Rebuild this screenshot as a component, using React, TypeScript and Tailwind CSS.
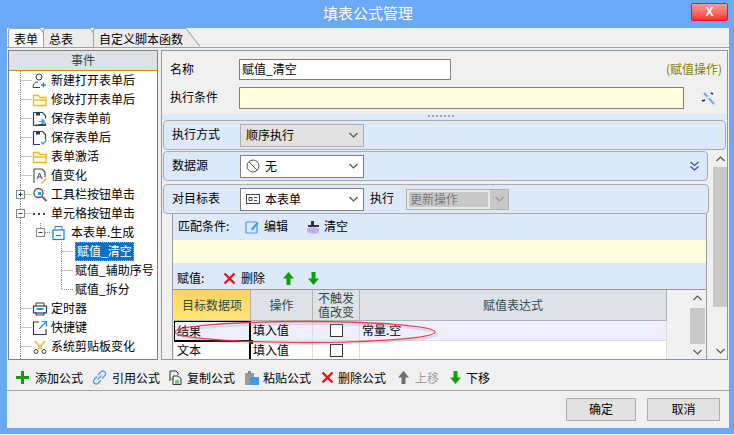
import type { ReactNode } from 'react'

const FONT = 'font-["Noto_Sans_CJK_SC",sans-serif]'

function Svg({ w = 16, h = 16, children }: { w?: number; h?: number; children: ReactNode }) {
  return (
    <svg width={w} height={h} viewBox={`0 0 ${w} ${h}`} fill="none" className="shrink-0 block">
      {children}
    </svg>
  )
}

function Chevron({ color = '#555' }: { color?: string }) {
  return (
    <svg width="9" height="6" viewBox="0 0 9 6" fill="none" className="shrink-0 block">
      <path d="M0.5 1l4 4 4-4" stroke={color} strokeWidth="1.2" />
    </svg>
  )
}

const icons: Record<string, ReactNode> = {
  user: (
    <Svg>
      <circle cx="7" cy="4" r="3" stroke="#444" />
      <path d="M1 14.5c0-4 2.5-5.500 5-5.500M1 14.500h7" stroke="#444" />
      <path d="M11.500 9.500v5M9 12h5" stroke="#10b060" strokeWidth="1.400" />
    </Svg>
  ),
  folder: (
    <Svg>
      <path d="M1.500 13.500v-10h5l1.500 2h6v8z" stroke="#ffb400" strokeWidth="1.300" />
      <path d="M1.500 8h13" stroke="#ffb400" strokeWidth="1.300" />
    </Svg>
  ),
  saveIn: (
    <Svg>
      <path d="M1.500 1.500h9l3 3v3M13.500 13v1.500h-12z M1.500 1.500v13" stroke="#2a3f55" strokeWidth="1.200" />
      <path d="M4 1.500h4v3h-4z" fill="#2a3f55" />
      <path d="M7 10.500h5M10 8l3 2.500-3 2.500z" stroke="#3a9be8" fill="#3a9be8" />
    </Svg>
  ),
  saveOk: (
    <Svg>
      <path d="M1.500 1.500h9l3 3v5M8 14.500h-6.500v-13" stroke="#2a3f55" strokeWidth="1.200" />
      <path d="M4 1.500h4v3h-4z" fill="#2a3f55" />
      <path d="M9 12l2 2 3.500-4" stroke="#3a9be8" strokeWidth="1.300" />
    </Svg>
  ),
  value: (
    <Svg>
      <path d="M2 15v-14h8l3 3v5" stroke="#445" strokeWidth="1.100" />
      <path d="M5 11l2.500-6 2.500 6M6 9h3" stroke="#445" />
      <path d="M9 15l5-5 1 1-5 5z" fill="#f0b030" />
    </Svg>
  ),
  tool: (
    <Svg>
      <circle cx="6.500" cy="6" r="4.500" stroke="#555" strokeWidth="1.300" />
      <path d="M10 9.500l4.500 4.500" stroke="#666" strokeWidth="2" />
      <rect x="6" y="5" width="3" height="3" fill="#2a9be8" />
      <path d="M13 3l-1 1" stroke="#bbb" />
    </Svg>
  ),
  dots: (
    <Svg w={14}>
      <rect x="1" y="7" width="2" height="2" fill="#444" />
      <rect x="6" y="7" width="2" height="2" fill="#444" />
      <rect x="11" y="7" width="2" height="2" fill="#444" />
    </Svg>
  ),
  form: (
    <Svg w={13}>
      <path d="M3 4.500v-3h7v3" stroke="#1380d8" />
      <rect x="1" y="5" width="11" height="9.500" stroke="#1380d8" strokeWidth="1.200" />
      <path d="M4 10.500h5" stroke="#1380d8" strokeWidth="1.200" />
    </Svg>
  ),
  timer: (
    <Svg>
      <path d="M4 5v-3h8v3" stroke="#2a3f55" />
      <rect x="1.500" y="5" width="13" height="7" stroke="#2a3f55" strokeWidth="1.200" />
      <rect x="4.500" y="7" width="7" height="2" fill="#1f8ee0" />
      <path d="M4 11v3h8v-3" stroke="#2a3f55" />
    </Svg>
  ),
  shortcut: (
    <Svg>
      <path d="M7 2h-5.500v12.500h12.500v-5.500" stroke="#2a3f55" strokeWidth="1.200" />
      <path d="M7 9l7-7M9.500 1.500h5v5" stroke="#1f8ee0" strokeWidth="1.200" />
    </Svg>
  ),
  scissors: (
    <Svg>
      <circle cx="4" cy="12.500" r="2" stroke="#444" />
      <circle cx="12" cy="12.500" r="2" stroke="#444" />
      <path d="M3 2l7 8.500M13 2l-7 8.500" stroke="#f0b020" strokeWidth="1.200" />
    </Svg>
  ),
}

type RowProps = {
  level: 1 | 2 | 3
  icon?: string
  text?: string
  exp?: '+' | '-'
  last?: boolean
  selected?: boolean
}

function Connector({ level, exp, last }: RowProps) {
  const w = level === 1 ? 23 : level === 2 ? 43 : 66
  return (
    <svg width={w} height="19" viewBox={`0 0 ${w} 19`} fill="none" className="shrink-0 block">
      <path d="M11.500 0v19" stroke="#888" strokeDasharray="1 1" />
      {level === 1 && <path d="M11.500 9.500h11" stroke="#888" strokeDasharray="1 1" />}
      {level === 2 && <path d="M31.500 0v9.500h11" stroke="#888" strokeDasharray="1 1" />}
      {level === 3 && <path d={last ? 'M52.500 0v9.500h12' : 'M52.500 0v19M52.500 9.500h12'} stroke="#888" strokeDasharray="1 1" />}
      {exp && (
        <>
          <rect
            x={level === 1 ? 7.500 : 27.500}
            y="5.500"
            width="8"
            height="8"
            fill="#fff"
            stroke="#888"
          />
          <path
            d={level === 1 ? 'M9.500 9.500h4' : 'M29.500 9.500h4'}
            stroke="#1f3f6f"
          />
          {exp === '+' && <path d="M11.500 7.500v4" stroke="#1f3f6f" />}
        </>
      )}
    </svg>
  )
}

function TreeRow(props: RowProps) {
  const { icon, text, selected } = props
  return (
    <div className="flex items-center h-[19px] shrink-0 whitespace-nowrap">
      <Connector {...props} />
      {icon && <span className="w-[19px]">{icons[icon]}</span>}
      {text && (
        <span
          className={
            selected
              ? 'bg-[#0670c8] text-white border border-dotted border-[#ff9020] h-[19px] px-[1px] leading-[16px]'
              : 'text-black leading-[17px] pb-[2px]'
          }
        >
          {text}
        </span>
      )}
    </div>
  )
}

function Tab({ text, active, w }: { text: string; active?: boolean; w: number }) {
  const fill = active ? '#fbfbfb' : '#ececec'
  return (
    <div className="flex h-[19px] mr-[-12px] first:ml-[1px]">
      <div
        className={
          'flex items-center pl-[5px] pt-[1px] border-l border-t border-[#a0a0a0] rounded-tl-[3px] ' +
          (active ? 'bg-[#fbfbfb]' : 'bg-[#ececec]')
        }
        style={{ width: w }}
      >
        {text}
      </div>
      <svg width="16" height="19" viewBox="0 0 16 19" fill="none" className="block shrink-0">
        <path d="M0 0.500h1l14 18.500h-15z" fill={fill} />
        <path d="M0 0.500h1l14 18" stroke="#909090" />
      </svg>
    </div>
  )
}

function Card({ label, children, className }: { label: string; children?: ReactNode; className: string }) {
  return (
    <div
      className={
        'flex items-center h-[30px] shrink-0 bg-[#dde9f8] border border-[#ababab] rounded-[4px] ' + className
      }
    >
      <span className="ml-[8px] w-[68px] pb-[2px]">{label}</span>
      {children}
    </div>
  )
}

function Select({ children, gray, w = 124 }: { children: ReactNode; gray?: boolean; w?: number }) {
  return (
    <div
      className={
        'flex items-center h-[23px] pl-[5px] pr-[5px] gap-[3px] ' +
        (gray ? 'bg-[#e1e1e1] border border-[#adadad]' : 'bg-white border border-[#7f7f7f]')
      }
      style={{ width: w }}
    >
      <span className="flex-1 flex items-center gap-[5px]">{children}</span>
      <Chevron />
    </div>
  )
}

function ToolItem({ icon, text, gray, className }: { icon: ReactNode; text: string; gray?: boolean; className: string }) {
  return (
    <div className={'flex items-center whitespace-nowrap ' + className}>
      {icon}
      <span className={gray ? 'text-[#a0a0a0]' : 'text-black'}>{text}</span>
    </div>
  )
}

const RedX = ({ s = 13 }: { s?: number }) => (
  <svg width={s} height={s} viewBox="0 0 13 13" fill="none" className="block shrink-0">
    <path d="M1.500 1.500l10 10M11.500 1.500l-10 10" stroke="#e8101c" strokeWidth="2.300" />
  </svg>
)

const Arrow = ({ up, color = '#0ca00f' }: { up?: boolean; color?: string }) => (
  <svg width="11" height="13" viewBox="0 0 11 13" fill="none" className="block shrink-0">
    <path d={up ? 'M5.500 0l5.500 6.500h-3.500v6.500h-4v-6.500h-3.500z' : 'M5.500 13l5.500-6.500h-3.500v-6.500h-4v6.500h-3.500z'} fill={color} />
  </svg>
)

function ScrollBar({ thumbTop, thumbH, w = 15 }: { thumbTop: number; thumbH: number; w?: number }) {
  return (
    <div className="flex flex-col items-center bg-[#f0f0f0] h-full shrink-0 overflow-hidden" style={{ width: w }}>
      <div className="h-[16px] shrink-0 flex items-center justify-center rotate-180">
        <Chevron color="#555" />
      </div>
      <div className="flex-1 w-full" style={{ paddingTop: thumbTop }}>
        <div className="bg-[#c9c9c9] w-full" style={{ height: thumbH }} />
      </div>
      <div className="h-[16px] shrink-0 flex items-center justify-center">
        <Chevron color="#555" />
      </div>
    </div>
  )
}

function Check() {
  return <div className="w-[13px] h-[13px] border border-[#333] bg-white" />
}

function HeadCell({ className, children }: { className: string; children: ReactNode }) {
  return (
    <div className={'flex items-center justify-center text-center shrink-0 text-[#2d4a4a] border-r border-[#aeb2b6] leading-[14px] ' + className}>
      {children}
    </div>
  )
}

export default function App() {
  return (
    <div className={'w-[734px] h-[434px] bg-[#6aa9f6] flex flex-col overflow-hidden text-[12px] text-black ' + FONT}>
      <div className="h-[28px] shrink-0 flex items-center relative">
        <div className="w-full text-center text-white text-[15px] pl-[2px] pb-[2px]">填表公式管理</div>
        <div className="absolute right-[6px] top-[3px] w-[37px] h-[18px] rounded-[2px] border border-[#f01020] bg-gradient-to-b from-[#ff9a9c] to-[#f52c30] flex items-center justify-center text-white font-bold text-[12px] font-['Liberation_Sans',sans-serif]">
          X
        </div>
      </div>

      <div className="ml-[7px] mr-[5px] h-[400px] bg-[#f0f0f0] flex flex-col">
        <div className="h-[20px] shrink-0 flex border-b border-[#a0a0a0]">
          <Tab text="表单" active w={31} />
          <Tab text="总表" w={46} />
          <Tab text="自定义脚本函数" w={92} />
        </div>

        <div className="flex h-[310px] mt-[2px] shrink-0">
          <div className="ml-[1px] w-[150px] shrink-0 border border-[#808080] bg-white flex flex-col overflow-hidden">
            <div className="h-[19px] shrink-0 bg-[#dee2e7] text-[#2d4a4a] text-center leading-[18px] border-b border-[#cc8a1e] box-content">
              事件
            </div>
            <TreeRow level={1} icon="user" text="新建打开表单后" />
            <TreeRow level={1} icon="folder" text="修改打开表单后" />
            <TreeRow level={1} icon="saveIn" text="保存表单前" />
            <TreeRow level={1} icon="saveOk" text="保存表单后" />
            <TreeRow level={1} icon="folder" text="表单激活" />
            <TreeRow level={1} icon="value" text="值变化" />
            <TreeRow level={1} icon="tool" text="工具栏按钮单击" exp="+" />
            <TreeRow level={1} icon="dots" text="单元格按钮单击" exp="-" />
            <TreeRow level={2} icon="form" text="本表单.生成" exp="-" />
            <TreeRow level={3} text="赋值_清空" selected />
            <TreeRow level={3} text="赋值_辅助序号" />
            <TreeRow level={3} text="赋值_拆分" last />
            <TreeRow level={1} icon="timer" text="定时器" />
            <TreeRow level={1} icon="shortcut" text="快捷键" />
            <TreeRow level={1} icon="scissors" text="系统剪贴板变化" />
            <TreeRow level={1} />
          </div>

          <div className="ml-[3px] w-[567px] shrink-0 border border-[#7a9ab5] flex flex-col overflow-hidden">
            <div className="flex items-center h-[21px] mt-[8px] shrink-0">
              <span className="ml-[8px] w-[69px] pb-[2px]">名称</span>
              <div className="w-[212px] h-[21px] border border-[#7f7f7f] bg-white pl-[2px] leading-[18px]">赋值_清空</div>
              <span className="ml-auto mr-[5px] text-[#808000] pb-[2px]">(赋值操作)</span>
            </div>
            <div className="flex items-center h-[22px] mt-[7px] shrink-0">
              <span className="ml-[8px] w-[69px] pb-[2px]">执行条件</span>
              <div className="w-[445px] h-[22px] border border-[#7f7f7f] bg-[#ffffe0]" />
              <div className="ml-[17px]">
                <Svg w={15} h={15}>
                  <path d="M3 2l10 11" stroke="#6fa8f0" strokeWidth="2" />
                  <path d="M2 11l9-8" stroke="#e8eef8" strokeWidth="2" />
                  <path d="M1 10l3-1M10 2l2 1" stroke="#222" strokeWidth="1.500" />
                </Svg>
              </div>
            </div>
            <div className="h-[6px] mt-[5px] bg-[#dde9f8] shrink-0 flex justify-center">
              <div className="ml-[-8px] mt-[1px] w-[26px] h-[2px] border-t-2 border-dotted border-[#a8a8a8]" />
            </div>

            <Card label="执行方式" className="ml-[1px] mr-[1px]">
              <Select gray>顺序执行</Select>
            </Card>

            <div className="flex flex-1 min-h-0 mt-[1px]">
              <div className="w-[547px] shrink-0 flex flex-col min-h-0">
                <Card label="数据源" className="ml-[1px] mr-[1px]">
                  <Select>
                    <Svg w={14} h={14}>
                      <circle cx="7" cy="7" r="6" stroke="#555" />
                      <path d="M3 3l8 8" stroke="#555" />
                    </Svg>
                    无
                  </Select>
                  <div className="ml-auto mr-[8px]">
                    <Svg w={9} h={10}>
                      <path d="M0.500 1l4 3.500 4-3.500M0.500 5.500l4 3.500 4-3.500" stroke="#2a4f8f" strokeWidth="1.100" />
                    </Svg>
                  </div>
                </Card>
                <Card label="对目标表" className="ml-[1px] mt-[3px]">
                  <Select>
                    <Svg w={14} h={12}>
                      <rect x="0.500" y="1.500" width="13" height="9" stroke="#444" />
                      <path d="M3 4.500h3v3h-3zM8 4.500h3M8 7.500h3" stroke="#444" />
                    </Svg>
                    本表单
                  </Select>
                  <span className="ml-[6px] pb-[2px]">执行</span>
                  <div className="ml-[12px] w-[103px] h-[21px] bg-[#c8c8c8] border border-[#b0b0b0] flex items-center">
                    <div className="w-[83px] h-[19px] border-2 border-[#e8e8e8] text-[#7a7a7a] leading-[14px] pl-[1px]">更新操作</div>
                    <div className="ml-[5px]">
                      <Chevron color="#999" />
                    </div>
                  </div>
                </Card>

                <div className="ml-[10px] mr-[2px] flex-1 min-h-0 border-l border-r border-[#9a9a9a] flex flex-col overflow-hidden relative">
                  <div className="h-[26px] bg-[#dde9f8] shrink-0 flex items-center pl-[5px]">
                    <span className="w-[67px] pb-[2px]">匹配条件:</span>
                    <Svg w={14} h={14}>
                      <rect x="1" y="2" width="11" height="11" rx="1" stroke="#3a9be8" strokeWidth="1.200" />
                      <path d="M6 9l6-7 1.500 1.500-6 7z" fill="#3a9be8" />
                    </Svg>
                    <span className="ml-[5px] pb-[2px]">编辑</span>
                    <div className="ml-[18px]">
                      <Svg w={14} h={14}>
                        <path d="M5 1h3v4h5v2h-11v-2h3z" fill="#333" />
                        <path d="M1 9c2-2 9-2 12 0v3c-3 2-8 2-12 0z" fill="#c8a8ee" />
                      </Svg>
                    </div>
                    <span className="ml-[4px] pb-[2px]">清空</span>
                  </div>
                  <div className="h-[23px] bg-[#ffffe0] shrink-0" />
                  <div className="h-[27px] bg-[#dde9f8] shrink-0 flex items-center pl-[4px] pt-[5px] border-b border-[#9a9a9a]">
                    <span className="w-[46px] pb-[1px]">赋值:</span>
                    <RedX />
                    <span className="ml-[5px] pb-[1px]">删除</span>
                    <div className="ml-[18px]">
                      <Arrow up />
                    </div>
                    <div className="ml-[14px]">
                      <Arrow />
                    </div>
                  </div>

                  <div className="flex flex-1 min-h-0 bg-[#f2f2f2]">
                    <div className="w-[1px] shrink-0 bg-[#dde9f8]" />
                    <div className="flex flex-col w-[493px] shrink-0">
                      <div className="flex h-[31px] shrink-0 border-b border-[#aeb2b6]">
                        <HeadCell className="w-[77px] bg-gradient-to-b from-[#ffd35c] to-[#ffe478]">目标数据项</HeadCell>
                        <HeadCell className="w-[62px] bg-[#dee2e7]">操作</HeadCell>
                        <HeadCell className="w-[47px] bg-[#dee2e7]">
                          不触发
                          <br />
                          值改变
                        </HeadCell>
                        <HeadCell className="w-[307px] bg-[#dee2e7]">赋值表达式</HeadCell>
                      </div>
                      <div className="flex h-[20px] shrink-0 bg-[#eeeeff] border-b border-[#dcdcdc]">
                        <div className="relative w-[77px] h-[21px] shrink-0 border-t border-l border-r-2 border-b-2 border-black pl-[2px] leading-[17px] bg-[#eeeeff]">
                          结果
                          <div className="absolute right-[-4px] bottom-[-4px] w-[4px] h-[4px] bg-black" />
                        </div>
                        <div className="w-[62px] shrink-0 pl-[2px] border-r border-[#dcdcdc] leading-[18px]">填入值</div>
                        <div className="w-[47px] shrink-0 border-r border-[#dcdcdc] flex items-center justify-center">
                          <Check />
                        </div>
                        <div className="pl-[2px] leading-[18px] w-[307px] border-r border-[#dcdcdc]">常量.空</div>
                      </div>
                      <div className="flex h-[20px] shrink-0 bg-white border-b border-[#dcdcdc]">
                        <div className="w-[77px] shrink-0 pl-[3px] border-r-2 border-black leading-[18px]">文本</div>
                        <div className="w-[62px] shrink-0 pl-[2px] border-r border-[#dcdcdc] leading-[18px]">填入值</div>
                        <div className="w-[47px] shrink-0 border-r border-[#dcdcdc] flex items-center justify-center">
                          <Check />
                        </div>
                        <div className="w-[307px] border-r border-[#dcdcdc]" />
                      </div>
                    </div>
                    <div className="w-[23px] shrink-0" />
                    <ScrollBar thumbTop={2} thumbH={36} />
                  </div>

                  <svg
                    width="268"
                    height="28"
                    viewBox="0 0 268 28"
                    fill="none"
                    className="absolute left-[0px] top-[106px] block pointer-events-none"
                  >
                    <ellipse cx="134" cy="14" rx="130" ry="10" stroke="#999" strokeWidth="2" opacity="0.25" />
                    <ellipse cx="132" cy="12" rx="130" ry="10.500" stroke="#e8404c" strokeWidth="1.300" />
                  </svg>
                </div>
              </div>
              <div className="w-[4px] shrink-0" />
              <ScrollBar thumbTop={0} thumbH={140} />
            </div>
          </div>
        </div>

        <div className="h-[31px] shrink-0 flex items-center pt-[5px] border-b border-[#a8a8a8]">
          <ToolItem
            className="ml-[9px] gap-[6px]"
            icon={
              <Svg w={13} h={13}>
                <path d="M6.500 0v13M0 6.500h13" stroke="#0ca00f" strokeWidth="3" />
              </Svg>
            }
            text="添加公式"
          />
          <ToolItem
            className="ml-[9px] gap-[5px]"
            icon={
              <Svg w={15} h={15}>
                <path d="M6 5l3-3.500c1.500-1 4-0.500 4.500 1.500s-0.500 2.500-1.500 3.500l-2 2M9 10l-3 3.500c-1.500 1-4 0.500-4.500-1.500s0.500-2.500 1.500-3.500l2-2M5.500 9.500l4-4" stroke="#4a9ae8" strokeWidth="1.300" />
              </Svg>
            }
            text="引用公式"
          />
          <ToolItem
            className="ml-[9px] gap-[5px]"
            icon={
              <Svg w={13} h={15}>
                <path d="M1 11v-10h6l2 2v2M4 6h5l3 2.500v6h-8z" stroke="#333" />
                <path d="M1 9h4M6 11h4M6 13h4" stroke="#0ca00f" strokeWidth="1.100" />
              </Svg>
            }
            text="复制公式"
          />
          <ToolItem
            className="ml-[10px] gap-[4px]"
            icon={
              <Svg w={14} h={15}>
                <path d="M0 3h9v12h-9z" fill="#9a9a9a" />
                <path d="M3 1h3v3h-3z" fill="#8a8a8a" />
                <path d="M5 7h9v8h-9z" fill="#3f9be8" />
              </Svg>
            }
            text="粘贴公式"
          />
          <ToolItem className="ml-[10px] gap-[4px]" icon={<RedX />} text="删除公式" />
          <ToolItem className="ml-[12px] gap-[6px]" icon={<Arrow up color="#707070" />} text="上移" gray />
          <ToolItem className="ml-[11px] gap-[5px]" icon={<Arrow />} text="下移" />
        </div>

        <div className="flex-1 flex items-center justify-end gap-[11px] pr-[9px]">
          <div className="w-[70px] h-[23px] bg-[#e1e1e1] border border-[#adadad] flex items-center justify-center pb-[1px]">确定</div>
          <div className="w-[73px] h-[23px] bg-[#e1e1e1] border border-[#adadad] flex items-center justify-center pb-[1px]">取消</div>
        </div>
      </div>
    </div>
  )
}
